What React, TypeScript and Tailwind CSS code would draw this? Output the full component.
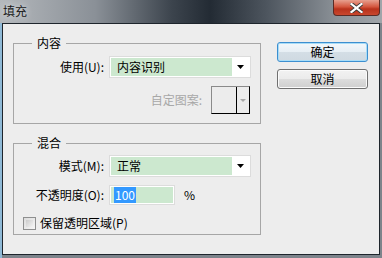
const font = "font-['Microsoft_YaHei','Noto_Sans_CJK_SC',sans-serif]";

function Combo({ value }: { value: string }) {
  return (
    <div className="flex h-[22px] w-[142px] border border-[#dcdcdc] bg-white p-[1px]">
      <div className="flex flex-1 items-center bg-[#cce8cf] pl-[6px] text-[12px] text-black">{value}</div>
      <div className="flex w-[17px] items-center justify-center">
        <svg width="7" height="4" viewBox="0 0 7 4">
          <path d="M0 0H7L3.5 4Z" fill="#000" />
        </svg>
      </div>
    </div>
  );
}

function Group({ title, children, height }: { title: string; children: React.ReactNode; height: string }) {
  return (
    <div className={`relative w-[248px] border border-[#a6a6a6] ${height}`}>
      <span className="absolute left-[18px] top-[-9px] bg-[#ededed] px-[5px] text-[12px] leading-[16px] text-black">
        {title}
      </span>
      {children}
    </div>
  );
}

export default function App() {
  return (
    <div className={`flex h-[258px] w-[382px] flex-col overflow-hidden bg-[#7d848b] ${font}`}>
      {/* title bar */}
      <div className="flex h-[23px] shrink-0 bg-[linear-gradient(90deg,#b4b8bc_0%,#8a9097_25%,#3c444d_45%,#232b34_55%,#4e565f_70%,#8b9197_88%,#a0a5aa_100%)]">
        <span className="pl-[3px] pt-[3px] text-[12px] leading-[16px] text-[#1a1a1a] [text-shadow:0_0_6px_#e8ecef]">填充</span>
        <div className="ml-auto mr-[2px] flex h-[16px] w-[47px] items-center justify-center rounded-b-[4px] border border-t-0 border-[#5b2b25] bg-[linear-gradient(180deg,#e7a08f_0%,#d4573f_45%,#b8321c_60%,#c9472e_100%)]">
          <svg width="13" height="10" viewBox="0 0 13 10">
            <path d="M1.5 1L11.5 9M11.5 1L1.5 9" stroke="#3a3a3a" strokeWidth="4" strokeLinecap="square" />
            <path d="M1.5 1L11.5 9M11.5 1L1.5 9" stroke="#fff" strokeWidth="2.2" strokeLinecap="square" />
          </svg>
        </div>
      </div>
      {/* body */}
      <div className="flex flex-1 bg-[linear-gradient(90deg,#8fb9d6_0px,#8fb9d6_2px,transparent_2px)] px-[2px] pb-[3px]">
        <div className="flex flex-1 border border-[#1e252c] bg-[#ededed] pl-[10px] pt-[19px]">
          <div className="flex flex-col">
            <Group title="内容" height="h-[81px]">
              <div className="mt-[12px] flex items-center">
                <span className="w-[90px] text-right text-[12px] text-black">使用(U):</span>
                <div className="ml-[5px]">
                  <Combo value="内容识别" />
                </div>
              </div>
              <div className="mt-[8px] flex items-center">
                <span className="w-[188px] text-right text-[12px] text-[#a8a8a8]">自定图案:</span>
                <div className="ml-[9px] flex h-[28px] w-[39px] border border-black border-l-[#8a8a8a] border-t-[#8a8a8a] bg-[#ececec]">
                  <div className="w-[25px] border-r border-black" />
                  <div className="flex flex-1 items-center justify-center">
                    <svg width="6" height="3" viewBox="0 0 6 3">
                      <path d="M0 0H6L3 3Z" fill="#a8a8a8" />
                    </svg>
                  </div>
                </div>
              </div>
            </Group>
            <div className="mt-[19px]">
              <Group title="混合" height="h-[92px]">
                <div className="mt-[11px] flex items-center">
                  <span className="w-[90px] text-right text-[12px] text-black">模式(M):</span>
                  <div className="ml-[5px]">
                    <Combo value="正常" />
                  </div>
                </div>
                <div className="mt-[8px] flex items-center">
                  <span className="w-[90px] text-right text-[12px] text-black">不透明度(O):</span>
                  <div className="ml-[5px] flex h-[20px] w-[66px] border border-[#dcdcdc] bg-white p-[1px]">
                    <div className="flex flex-1 items-center bg-[#cce8cf] pl-[3px]">
                      <span className="bg-[#3399ff] px-[1px] text-[12px] leading-[16px] text-white">100</span>
                    </div>
                  </div>
                  <span className="ml-[9px] text-[12px] text-black">%</span>
                </div>
                <div className="mt-[9px] flex items-center pl-[9px]">
                  <div className="h-[13px] w-[13px] border border-[#8e8f8f] bg-[linear-gradient(135deg,#dcdcdc,#f6f6f6)] p-[2px]">
                    <div className="h-full w-full bg-[linear-gradient(135deg,#cbcbcb,#f3f3f3)]" />
                  </div>
                  <span className="ml-[4px] text-[12px] text-black">保留透明区域(P)</span>
                </div>
              </Group>
            </div>
          </div>
          <div className="ml-[16px] mt-[-1px] flex flex-col gap-[7px]">
            <button className="h-[20px] w-[91px] rounded-[3px] border border-[#3c8fd0] bg-[linear-gradient(180deg,#f3f8fb_0%,#e6eef4_50%,#d4dee6_51%,#cfd9e1_100%)] text-[12px] leading-none text-black shadow-[inset_0_0_0_1px_#a8dcf7]">
              确定
            </button>
            <button className="h-[20px] w-[91px] rounded-[3px] border border-[#707070] bg-[linear-gradient(180deg,#f2f2f2_0%,#ebebeb_50%,#dddddd_51%,#cfcfcf_100%)] text-[12px] leading-none text-black shadow-[inset_0_0_0_1px_#fbfbfb]">
              取消
            </button>
          </div>
        </div>
      </div>
    </div>
  );
}
